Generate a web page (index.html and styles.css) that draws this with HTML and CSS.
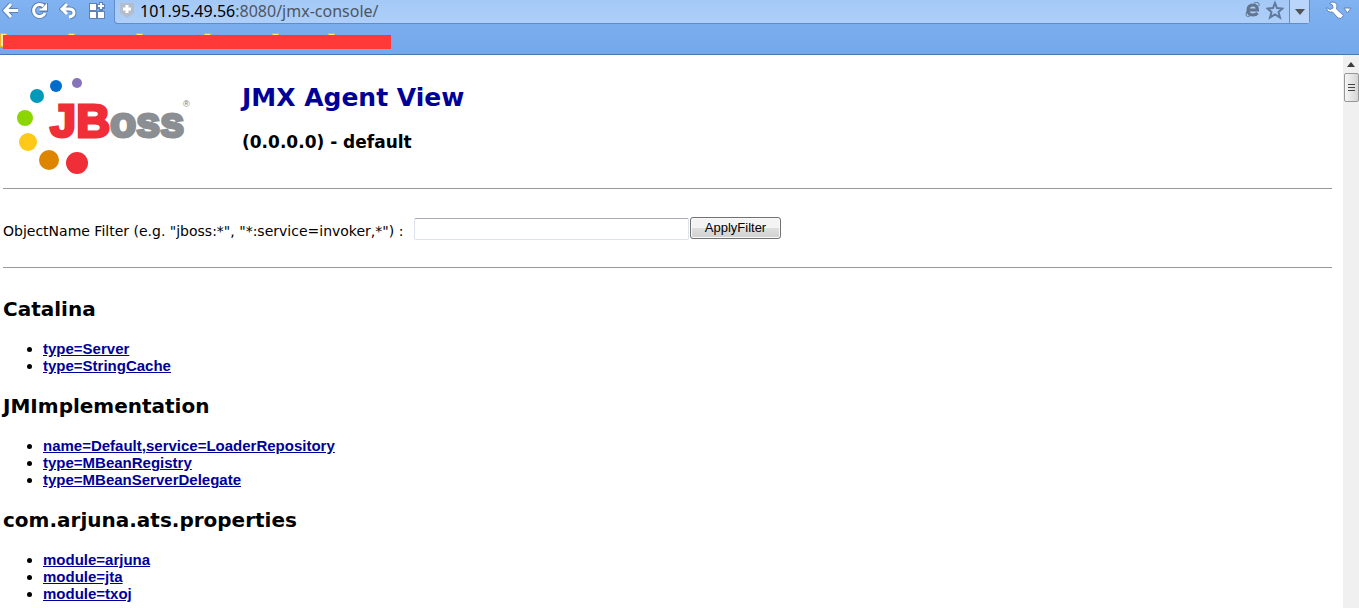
FILE: index.html
```html
<!DOCTYPE html>
<html lang="en">
<head>
<meta charset="utf-8">
<title>JMX Agent View</title>
<link rel="stylesheet" href="styles.css">
</head>
<body>
<header class="chrome">
  <div class="toolbar">
    <nav class="nav">
      <button class="icon-btn" type="button" aria-label="Back">
        <svg width="18" height="20" viewBox="0 0 18 20"><path class="halo" d="M10 4L4 10.500L10 17M4 10.500H17"/><path class="line" d="M10 4L4 10.500L10 17M4 10.500H17"/></svg>
      </button>
      <button class="icon-btn" type="button" aria-label="Reload">
        <svg width="18" height="20" viewBox="0 0 18 20"><path class="halo" d="M13.500 6A6 6 0 1 0 15 13M16 3V9.500H9.500"/><path class="line" d="M13.500 6A6 6 0 1 0 15 13"/><path class="solid" d="M17 3V10.500H9.500V8.500L12 8.500Z"/></svg>
      </button>
      <button class="icon-btn" type="button" aria-label="Undo">
        <svg width="18" height="20" viewBox="0 0 18 20"><path class="halo" d="M8 4L3 9L8 13M4 9H10Q15 9 15 13Q15 16 11 17"/><path class="line" d="M8 4L3 9L8 14M4 9H10Q15 9 15 13Q15 16 10 17"/></svg>
      </button>
      <button class="icon-btn" type="button" aria-label="Apps">
        <svg width="18" height="20" viewBox="0 0 18 20"><path class="outline" d="M2 4H8V10H2ZM2 12H8V18H2ZM10 12H16V18H10ZM12 3H14V5H16V8H14V10H12V8H10V5H12Z"/><path class="solid" d="M2 4H8V10H2ZM2 12H8V18H2ZM10 12H16V18H10ZM12 3H14V5H16V7H14V9H12V7H10V5H12Z"/></svg>
      </button>
    </nav>
    <div class="address">
      <svg class="shield" width="16" height="20" viewBox="0 0 16 20"><path d="M1 3H15V13L8 18L1 13Z" fill="#b3bdcb"/><path d="M8 5V13M4 9H12" stroke="#fff" stroke-width="3" fill="none"/></svg>
      <span class="url"><span class="host">101.95.49.56</span>:8080/jmx-console/</span>
      <button class="icon-btn" type="button" aria-label="Compatibility mode">
        <svg width="16" height="20" viewBox="0 0 16 20"><path d="M3 10H12.500Q12.500 5 8 5Q3 5 3 10Q3 15 8 15Q11 15 12.500 13" fill="none" stroke="#61758f" stroke-width="3"/><path d="M9 3Q15 1 14 6M2 11Q-1 18 5 16" fill="none" stroke="#61758f" stroke-width="1"/></svg>
      </button>
      <button class="icon-btn" type="button" aria-label="Bookmark">
        <svg width="18" height="20" viewBox="0 0 18 20"><path d="M9 3L11 8L16.500 8.500L12.500 12L14 17.500L9 14.500L4 17.500L5.500 12L1.500 8.500L7 8Z" fill="none" stroke="#61799b" stroke-width="2"/></svg>
      </button>
      <button class="drop" type="button" aria-label="History">
        <svg width="10" height="6" viewBox="0 0 10 6"><path d="M0 0H10L5 6Z" fill="#505459"/></svg>
      </button>
    </div>
    <button class="tools" type="button" aria-label="Tools">
      <svg width="26" height="20" viewBox="0 0 26 20"><path d="M6 2Q11 2 11 6L10.500 9L17.500 15.500L15 18.500L12 18L6.500 12Q1 13 0.500 7.500L4 9.500L7 8L6.500 5L3.500 3.500Z" fill="#fff" stroke="#5c85bd" stroke-width="1"/><path d="M18 8H25L21.500 13Z" fill="#fff" stroke="#5c85bd" stroke-width="1"/></svg>
    </button>
  </div>
  <div class="bookmarks">
    <div class="folders"><i class="folder"></i><i class="folder"></i><i class="folder"></i><i class="folder"></i><i class="folder"></i><i class="folder short"></i></div>
    <div class="redaction"></div>
  </div>
</header>
<div class="view">
  <main class="page">
    <div class="masthead">
      <svg class="logo" width="190" height="110" viewBox="0 0 190 110" role="img" aria-label="JBoss">
        <circle cx="74" cy="15" r="5" fill="#8673b9"/>
        <circle cx="53" cy="18" r="6" fill="#006ccb"/>
        <circle cx="34" cy="28" r="7" fill="#0099ba"/>
        <circle cx="22" cy="50" r="8" fill="#8cd600"/>
        <circle cx="25" cy="74" r="9" fill="#ffc917"/>
        <circle cx="46" cy="92" r="10" fill="#dd8500"/>
        <circle cx="74" cy="95" r="11" fill="#ef2e38"/>
        <text class="logo-name" x="47" y="69"><tspan class="logo-jb">JB</tspan><tspan class="logo-oss">oss</tspan></text>
        <text class="logo-reg" x="180" y="39">®</text>
      </svg>
      <div class="titles">
        <h1>JMX Agent View</h1>
        <h3>(0.0.0.0) - default</h3>
      </div>
    </div>
    <hr>
    <form class="filter">
      <label for="filter">ObjectName Filter (e.g. "jboss:*", "*:service=invoker,*") :</label>
      <input id="filter" type="text">
      <button class="apply" type="button">ApplyFilter</button>
    </form>
    <hr>
    <h2>Catalina</h2>
    <ul>
      <li><a href="#">type=Server</a></li>
      <li><a href="#">type=StringCache</a></li>
    </ul>
    <h2>JMImplementation</h2>
    <ul>
      <li><a href="#">name=Default,service=LoaderRepository</a></li>
      <li><a href="#">type=MBeanRegistry</a></li>
      <li><a href="#">type=MBeanServerDelegate</a></li>
    </ul>
    <h2>com.arjuna.ats.properties</h2>
    <ul>
      <li><a href="#">module=arjuna</a></li>
      <li><a href="#">module=jta</a></li>
      <li><a href="#">module=txoj</a></li>
    </ul>
  </main>
  <div class="scrollbar">
    <svg class="arrow" width="8" height="5" viewBox="0 0 8 5"><path d="M0 5L4 0L8 5Z" fill="#3c3c3c"/></svg>
    <div class="thumb"><i></i><i></i><i></i></div>
  </div>
</div>
</body>
</html>
```
FILE: styles.css
```css
* { box-sizing: border-box; }
body {
  margin: 0;
  height: 100vh;
  display: flex;
  flex-direction: column;
  overflow: hidden;
  background: #fff;
  color: #000;
  font-family: Verdana, "DejaVu Sans", sans-serif;
  font-size: 14px;
}
button { margin: 0; padding: 0; border: 0; background: none; }
svg { display: block; }

.chrome {
  flex: none;
  background: linear-gradient(#81b2f1, #73a8ec);
  border-bottom: 1px solid #4877b5;
}
.toolbar { display: flex; height: 24px; }
.nav { display: flex; gap: 11px; padding-left: 1px; width: 114px; }
.icon-btn { height: 20px; }
.halo { fill: none; stroke: #5c82b8; stroke-width: 5; }
.line { fill: none; stroke: #fff; stroke-width: 3; }
.outline { fill: #fff; stroke: #5c82b8; stroke-width: 2; }
.solid { fill: #fff; }

.address {
  flex: 1;
  display: flex;
  gap: 5px;
  padding-left: 4px;
  background: linear-gradient(#a5c9f7, #adcff9);
  border: 1px solid #618dc9;
  border-top: 0;
  border-radius: 0 0 4px 4px;
}
.url {
  flex: 1;
  font: 16px/22px "Noto Sans", sans-serif;
  color: #4d5661;
}
.host { color: #000; }
.drop {
  width: 20px;
  display: flex;
  align-items: center;
  justify-content: center;
  border-left: 1px solid #618dc9;
  background: #b9d5fa;
}
.tools { width: 49px; padding-left: 16px; height: 20px; }

.bookmarks { height: 30px; padding-top: 9px; }
.folders { display: flex; gap: 61px; height: 2px; }
.folder { width: 7px; height: 14px; background: #ffe9a5; border: 1px solid #efb22e; }
.folder.short { margin-left: -12px; }
.redaction {
  position: relative;
  width: 388px;
  height: 14px;
  margin-left: 3px;
  background: #ff3838;
}

.view { flex: 1; display: flex; min-height: 0; }
.page { flex: 1; padding: 13px 11px 0 3px; overflow: hidden; }
.masthead { display: flex; gap: 49px; height: 120px; }
.logo-name { font-family: "Liberation Sans", Arial, sans-serif; font-weight: bold; stroke-width: 3px; }
.logo-jb { font-size: 47px; fill: #ef2e38; stroke: #ef2e38; }
.logo-oss { font-size: 43px; fill: #8b8e92; stroke: #8b8e92; }
.logo-reg { font: 9px "Liberation Sans", Arial, sans-serif; fill: #777; }
.titles { padding-top: 14px; }
h1, h2, h3 { margin: 0; }
h1 { font-size: 25px; line-height: 32px; color: #000099; }
h3 { margin-top: 18px; font-size: 17px; line-height: 20px; }
hr { margin: 0; border: 0; height: 1px; background: #999; }

.filter { display: flex; padding: 28px 0; height: 78px; }
.filter label { flex: none; min-width: 411px; line-height: 28px; }
.filter input {
  width: 275px;
  height: 22px;
  margin-top: 1px;
  border: 1px solid #dde3ec;
  border-top-color: #abadb3;
  border-radius: 2px;
}
.apply {
  width: 91px;
  height: 22px;
  margin-left: 1px;
  border: 1px solid #707070;
  border-radius: 3px;
  background: linear-gradient(#f3f3f3 0 48%, #dedede 52%, #d0d0d0);
  box-shadow: inset 0 0 0 1px #fafafa;
  font: 13px/18px "Liberation Sans", Arial, sans-serif;
}

h2 { font-size: 20px; line-height: 24px; margin-top: 20px; }
hr + h2 { margin-top: 29px; }
ul { margin: 19px 0 0; padding-left: 40px; }
li { font: bold 15px/17px "Liberation Sans", Arial, sans-serif; }
li a { color: #000099; }

.scrollbar {
  width: 16px;
  display: flex;
  flex-direction: column;
  align-items: center;
  background: #f0f0f0;
}
.arrow { margin: 7px 0 6px; }
.thumb {
  width: 15px;
  height: 29px;
  display: flex;
  flex-direction: column;
  align-items: center;
  justify-content: center;
  gap: 2px;
  border: 1px solid #979797;
  border-radius: 2px;
  background: linear-gradient(90deg, #f5f5f5, #d5d5d5);
}
.thumb i { width: 7px; height: 1px; background: #444; }
```
